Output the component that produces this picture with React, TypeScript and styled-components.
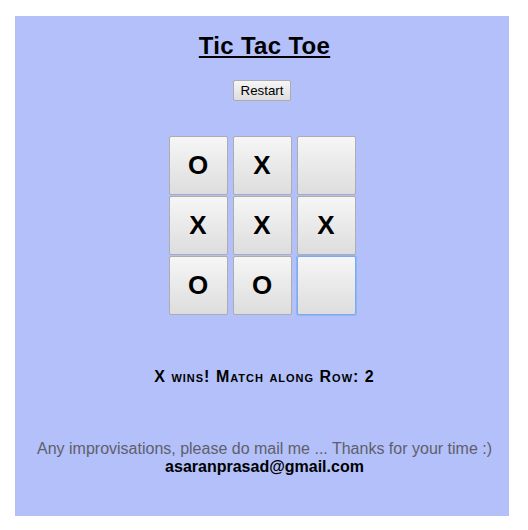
import styled, { createGlobalStyle, css } from 'styled-components';

const GlobalStyle = createGlobalStyle`
  body {
    margin: 0;
    background: #ffffff;
    font-family: "Liberation Sans", Arial, sans-serif;
  }
`;

const Page = styled.div`
  padding: 16px 0 0 15px;
`;

const Panel = styled.div`
  width: 494px;
  height: 500px;
  box-sizing: border-box;
  padding: 16px 0 0 5px;
  background: #b3c0fa;

  display: flex;
  flex-direction: column;
  align-items: center;
`;

const Title = styled.h1`
  margin: 0;
  font-size: 24px;
  line-height: 28px;
  font-weight: bold;
  letter-spacing: 0.3px;
  text-decoration: underline;
  color: #000;
`;

const RestartButton = styled.button`
  margin: 20px 0 0 -5px;
  height: 21px;
  padding: 0 7px;
  font-family: "Liberation Sans", Arial, sans-serif;
  font-size: 13.33px;
  color: #000;
  background: linear-gradient(#f6f6f6, #dddddd);
  border: 1px solid #acacac;
  border-radius: 2px;
`;

const Board = styled.div`
  margin: 35px 0 0 -5px;
  display: grid;
  grid-template-columns: repeat(3, 59px);
  grid-auto-rows: 59px;
  column-gap: 5px;
  row-gap: 1px;
`;

interface CellProps {
  focused?: boolean;
}

const Cell = styled.button<CellProps>`
  width: 59px;
  height: 59px;
  padding: 0;
  box-sizing: border-box;
  font-family: "Liberation Sans", Arial, sans-serif;
  font-size: 26px;
  font-weight: bold;
  color: #000;
  background: linear-gradient(#f6f6f6, #dddddd);
  border: 1px solid #adadad;
  border-radius: 2px;

  ${(props) =>
    props.focused &&
    css`
      border: 1px solid #7eaaf0;
      box-shadow: 0 0 0 1px #8fb4f2;
    `}
`;

const Status = styled.div`
  margin-top: 53px;
  font-size: 16px;
  line-height: 18px;
  font-weight: bold;
  font-variant: small-caps;
  letter-spacing: 1px;
  color: #000;
`;

const Footer = styled.div`
  margin-top: 54px;
  text-align: center;
  font-size: 16px;
  line-height: 18px;
  color: #5f5f6a;
`;

const Email = styled.div`
  font-weight: bold;
  color: #000;
`;

const board = ['O', 'X', '', 'X', 'X', 'X', 'O', 'O', ''];

const App: React.FC = () => {
  return (
    <Page>
      <GlobalStyle />
      <Panel>
        <Title>Tic Tac Toe</Title>
        <RestartButton>Restart</RestartButton>
        <Board>
          {board.map((value, i) => (
            <Cell key={i} focused={i === 8}>
              {value}
            </Cell>
          ))}
        </Board>
        <Status>X wins! Match along Row: 2</Status>
        <Footer>
          Any improvisations, please do mail me ... Thanks for your time :)
          <Email>asaranprasad@gmail.com</Email>
        </Footer>
      </Panel>
    </Page>
  );
};

export default App;
